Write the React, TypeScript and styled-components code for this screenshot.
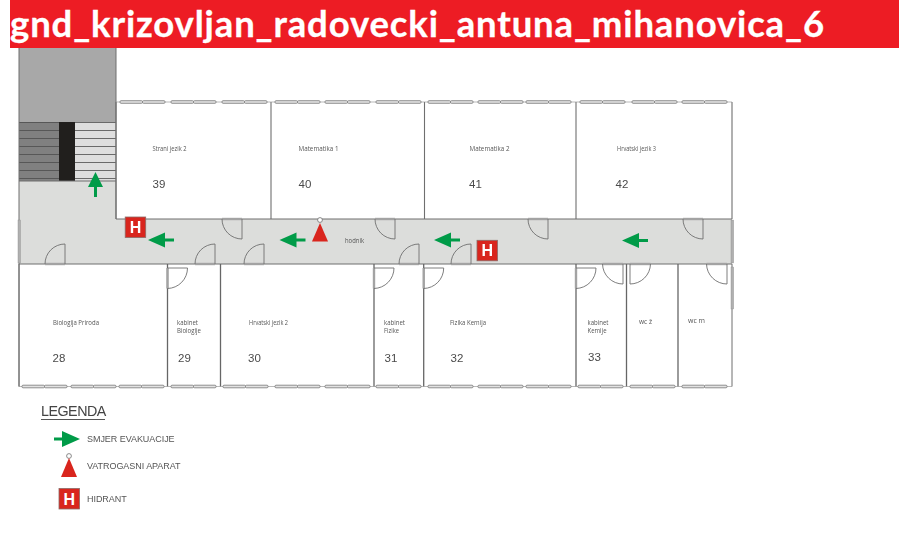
import React from "react";
import styled, { createGlobalStyle } from "styled-components";

const Global = createGlobalStyle`
  html, body { margin: 0; padding: 0; background: #fff; }
  body { font-family: "Liberation Sans", Arial, sans-serif; }
`;

const Page = styled.main`
  width: 889px;
  margin-left: 10px;
  display: flex;
  flex-direction: column;
`;

const TitleBar = styled.h1`
  margin: 0;
  height: 48px;
  background: #ed1c24;
  color: #fff;
  font: 700 36.5px/46px Lato, "Open Sans", sans-serif;
  letter-spacing: 0.86px;
  -webkit-text-stroke: 0.3px #fff;
  white-space: nowrap;
  overflow: hidden;
`;

const PlanSvg = styled.svg`
  display: block;
  width: 889px;
  height: 347px;
  filter: blur(0.35px);
`;

const RoomName = styled.text`
  font: 400 6.4px "Open Sans", sans-serif;
  fill: #555;
`;

const RoomNumber = styled.text`
  font: 400 11.5px "Liberation Sans", sans-serif;
  fill: #4a4a4a;
`;

const HLetter = styled.text`
  font: 700 16px "Liberation Sans", sans-serif;
  fill: #fff;
  text-anchor: middle;
`;

const Legend = styled.section`
  display: flex;
  flex-direction: column;
  padding-left: 31px;
  filter: blur(0.3px);
`;

const LegendTitle = styled.h2`
  margin: 8px 0 0;
  width: 64px;
  font: 400 14.3px/16px "Liberation Sans", sans-serif;
  color: #444;
  border-bottom: 1px solid #555;
  white-space: nowrap;
  letter-spacing: -0.5px;
`;

const LegendList = styled.ul`
  list-style: none;
  margin: 5px 0 0;
  padding: 0 0 0 13px;
  display: flex;
  flex-direction: column;
`;

const LegendRow = styled.li<{ $h: number }>`
  height: ${(p) => p.$h}px;
  display: flex;
  align-items: center;
  gap: 7px;
`;

const LegendIcon = styled.svg`
  display: block;
  width: 26px;
  height: 26px;
  flex: none;
`;

const LegendText = styled.span`
  font: 400 9px "Liberation Sans", sans-serif;
  color: #555;
  white-space: nowrap;
  letter-spacing: -0.05px;
`;

const WALL = "#6f6f6f";
const GREEN = "#009b48";
const RED = "#d9251d";

const range = (n: number) => Array.from({ length: n }, (_, i) => i);

const Window = ({ x, y }: { x: number; y: number }) => (
  <g fill="#e2e2e2" stroke="#777" strokeWidth={0.8}>
    <rect x={x} y={y - 1.3} width={22.5} height={2.6} rx={1} />
    <rect x={x + 22.5} y={y - 1.3} width={22.5} height={2.6} rx={1} />
  </g>
);

/* hx,hy: hinge; lx,ly: end of the open leaf; ax,ay: end of the arc on the frame */
const Door = ({ hx, hy, lx, ly, ax, ay, sweep }: { hx: number; hy: number; lx: number; ly: number; ax: number; ay: number; sweep: 0 | 1 }) => (
  <g fill="none">
    <path d={`M${hx} ${hy}L${ax} ${ay}`} stroke="#a3a3a3" strokeWidth={2.4} />
    <path d={`M${hx} ${hy}L${lx} ${ly}`} stroke={WALL} strokeWidth={0.9} />
    <path d={`M${lx} ${ly}A${Math.abs(ax - hx) + Math.abs(ay - hy)} ${Math.abs(ax - hx) + Math.abs(ay - hy)} 0 0 ${sweep} ${ax} ${ay}`} stroke={WALL} strokeWidth={0.9} />
  </g>
);

const ArrowLeft = ({ x, y }: { x: number; y: number }) => (
  <path d={`M${x} ${y}L${x + 17} ${y - 7.5}V${y - 1.5}H${x + 26}V${y + 1.5}H${x + 17}V${y + 7.5}Z`} fill={GREEN} />
);

const Hydrant = ({ x, y }: { x: number; y: number }) => (
  <g>
    <rect x={x} y={y} width={20.5} height={20.5} fill={RED} stroke="#8d6a66" strokeWidth={0.8} />
    <HLetter x={x + 10.25} y={y + 16}>H</HLetter>
  </g>
);

const Extinguisher = ({ cx, top }: { cx: number; top: number }) => (
  <g>
    <circle cx={cx} cy={top} r={2.4} fill="#fff" stroke={WALL} strokeWidth={0.8} />
    <path d={`M${cx} ${top + 3}L${cx + 8} ${top + 21.5}H${cx - 8}Z`} fill={RED} />
  </g>
);

const topWindows = [120, 171, 222, 275, 325, 376, 428, 478, 526, 580, 632, 682];
const bottomWindows = [22, 71, 119, 171, 223, 275, 325, 376, 428, 478, 526, 578, 630, 682];
const topWalls = [116, 271, 424.5, 576, 732];
const bottomWalls = [19, 167.5, 220.5, 374, 423.7, 576, 626.5, 678, 732];

const names = [
  { t: "Strani jezik 2", x: 152.5, y: 151, w: 34 },
  { t: "Matematika 1", x: 298.5, y: 151, w: 40 },
  { t: "Matematika 2", x: 469.5, y: 151, w: 40 },
  { t: "Hrvatski jezik 3", x: 617, y: 151, w: 39 },
  { t: "hodnik", x: 345, y: 243, w: 19 },
  { t: "Biologija Priroda", x: 53, y: 324.5, w: 46 },
  { t: "kabinet", x: 177, y: 324.5, w: 21 },
  { t: "Biologije", x: 177, y: 332.5, w: 24 },
  { t: "Hrvatski jezik 2", x: 249, y: 324.5, w: 39 },
  { t: "kabinet", x: 384, y: 324.5, w: 21 },
  { t: "Fizike", x: 384, y: 332.5, w: 15 },
  { t: "Fizika Kemija", x: 450, y: 324.5, w: 36 },
  { t: "kabinet", x: 587.5, y: 324.5, w: 21 },
  { t: "Kemije", x: 587.5, y: 332.5, w: 19 },
  { t: "wc ž", x: 639, y: 324, w: 13 },
  { t: "wc m", x: 688, y: 323, w: 17 },
];

const numbers = [
  { t: "39", x: 152.5, y: 188 }, { t: "40", x: 298.5, y: 188 }, { t: "41", x: 469, y: 188 }, { t: "42", x: 615.5, y: 188 },
  { t: "28", x: 52.5, y: 362 }, { t: "29", x: 178, y: 362 }, { t: "30", x: 248, y: 362 }, { t: "31", x: 384.5, y: 362 },
  { t: "32", x: 450.5, y: 362 }, { t: "33", x: 588, y: 360.5 },
];

const FloorPlan = () => (
  <PlanSvg viewBox="10 48 889 347" role="img" aria-label="Evakuacijski plan">
    <rect x={19} y={48} width={97} height={74} fill="#a8a8a8" />
    <rect x={19} y={122} width={40} height={59} fill="#808080" />
    <rect x={75} y={122} width={41} height={59} fill="#dedede" />
    {range(8).map((i) => (
      <path key={i} d={`M19 ${122.5 + i * 8}H59M75 ${122.5 + i * 8}H116`} stroke="#4d4d4d" strokeWidth={0.8} />
    ))}
    <rect x={59} y={122} width={16} height={59} fill="#211f1d" />
    <path d="M19 181H116V219H732V264H19Z" fill="#dcdddb" />

    <path d="M19 48V386.5M19 181H116M116 48V219H732M19 264H732" fill="none" stroke={WALL} strokeWidth={1} />
    {topWalls.map((x) => <path key={x} d={`M${x} 102V219`} stroke={WALL} strokeWidth={1.1} />)}
    {bottomWalls.map((x) => (
      <path key={x} d={`M${x} 264V386.5`} stroke={x > 20 && x < 732 ? "#666" : WALL} strokeWidth={x > 20 && x < 732 ? 1.3 : 1} />
    ))}

    <path d="M116 102H732M19 386.5H732" stroke="#8a8a8a" strokeWidth={0.6} />
    {topWindows.map((x) => <Window key={x} x={x} y={102} />)}
    {bottomWindows.map((x) => <Window key={x} x={x} y={386.5} />)}

    <rect x={18} y={220} width={2.4} height={43} fill="#b0b0b0" stroke="#8a8a8a" strokeWidth={0.4} />
    <rect x={731} y={220} width={2.6} height={43} fill="#b0b0b0" stroke="#8a8a8a" strokeWidth={0.4} />
    <rect x={731} y={267} width={2.6} height={42} fill="#b0b0b0" stroke="#8a8a8a" strokeWidth={0.4} />

    {[65, 215, 264, 419, 471].map((x) => (
      <Door key={x} hx={x} hy={264} lx={x} ly={244} ax={x - 20} ay={264} sweep={0} />
    ))}
    {[242, 395, 548, 703].map((x) => (
      <Door key={x} hx={x} hy={219} lx={x} ly={239} ax={x - 20} ay={219} sweep={1} />
    ))}
    {[167.5, 374, 423.7, 576].map((x) => (
      <Door key={x} hx={x} hy={268} lx={x + 20} ly={268} ax={x} ay={288.5} sweep={1} />
    ))}
    <Door hx={623} hy={264} lx={623} ly={284} ax={602.5} ay={264} sweep={1} />
    <Door hx={630} hy={264} lx={630} ly={284} ax={650.5} ay={264} sweep={0} />
    <Door hx={727} hy={264} lx={727} ly={284} ax={706.5} ay={264} sweep={1} />

    <path d="M95.5 172L103 187H97V197H94V187H88Z" fill={GREEN} />
    <ArrowLeft x={148} y={240} />
    <ArrowLeft x={279.5} y={240} />
    <ArrowLeft x={434} y={240} />
    <ArrowLeft x={622} y={240.5} />
    <Hydrant x={125.2} y={217} />
    <Hydrant x={477} y={240.3} />
    <Extinguisher cx={320} top={220} />

    {names.map((n) => (
      <RoomName key={n.t + n.x} x={n.x} y={n.y} textLength={n.w} lengthAdjust="spacingAndGlyphs">{n.t}</RoomName>
    ))}
    {numbers.map((n) => <RoomNumber key={n.t} x={n.x} y={n.y}>{n.t}</RoomNumber>)}
  </PlanSvg>
);

export default function App() {
  return (
    <>
      <Global />
      <Page>
        <TitleBar>gnd_krizovljan_radovecki_antuna_mihanovica_6</TitleBar>
        <FloorPlan />
        <Legend>
          <LegendTitle>LEGENDA</LegendTitle>
          <LegendList>
            <LegendRow $h={27}>
              <LegendIcon viewBox="0 0 26 26">
                <path d="M26 13L8 5V11.5H0V14.5H8V21Z" fill={GREEN} />
              </LegendIcon>
              <LegendText>SMJER EVAKUACIJE</LegendText>
            </LegendRow>
            <LegendRow $h={28}>
              <LegendIcon viewBox="0 0 26 26">
                <circle cx={15} cy={3} r={2.4} fill="#fff" stroke={WALL} strokeWidth={0.8} />
                <path d="M15 5L23 24H7Z" fill={RED} />
              </LegendIcon>
              <LegendText>VATROGASNI APARAT</LegendText>
            </LegendRow>
            <LegendRow $h={38}>
              <LegendIcon viewBox="0 0 26 26">
                <rect x={5} y={2.5} width={20.5} height={20.5} fill={RED} stroke="#8d6a66" strokeWidth={0.8} />
                <HLetter x={15.25} y={18.5}>H</HLetter>
              </LegendIcon>
              <LegendText>HIDRANT</LegendText>
            </LegendRow>
          </LegendList>
        </Legend>
      </Page>
    </>
  );
}
